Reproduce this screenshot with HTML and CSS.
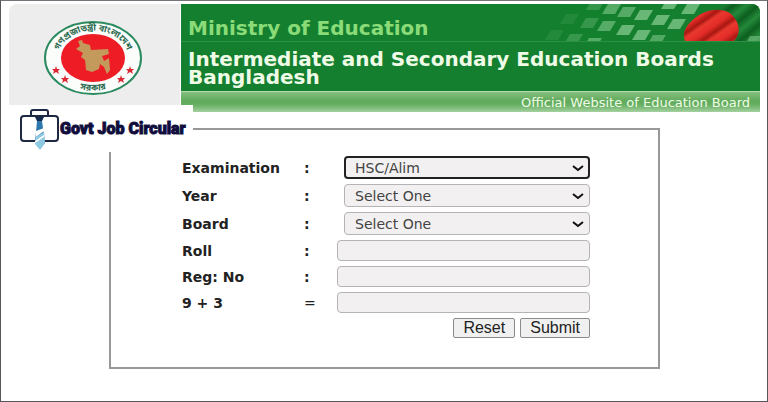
FILE: index.html
```html
<!DOCTYPE html>
<html lang="en">
<head>
<meta charset="utf-8">
<title>Intermediate and Secondary Education Boards Bangladesh</title>
<link rel="stylesheet" href="styles.css">
</head>
<body>
<div class="page">
  <header class="banner">
    <div class="emblem-box">
      <svg class="emblem" viewBox="0 0 98 74" role="img" aria-label="Government seal of Bangladesh">
        <defs>
          <path id="arc-top" d="M15 43A35 27 0 1 1 83 43"/>
          <path id="arc-bottom" d="M20 61A42 31 0 0 0 78 61"/>
          <path id="star" d="M0-4 1-1 4-1 2 1 3 4 0 2-3 4-2 1-4-1-1-1Z"/>
        </defs>
        <ellipse cx="49" cy="37" rx="48" ry="36" fill="#fbfdfb" stroke="#2b8a5f" stroke-width="2"/>
        <ellipse cx="49" cy="37" rx="32" ry="24" fill="#ee1c25"/>
        <path d="M34 20 38 19 39 22 46 24 47 29 64 28 65 33 58 35 60 40 65 37 66 49 63 53 60 46 56 43 55 48 48 51 42 49 41 39 37 36 39 32 32 28 36 25Z" fill="#c39a5c"/>
        <text class="seal-text"><textPath href="#arc-top" startOffset="50%" text-anchor="middle">গণপ্রজাতন্ত্রী বাংলাদেশ</textPath></text>
        <text class="seal-text"><textPath href="#arc-bottom" startOffset="50%" text-anchor="middle">সরকার</textPath></text>
        <g fill="#dc2733">
          <use href="#star" x="12" y="49"/><use href="#star" x="21" y="58"/>
          <use href="#star" x="77" y="58"/><use href="#star" x="86" y="49"/>
        </g>
      </svg>
    </div>
    <div class="titles">
      <svg class="flag" viewBox="0 0 220 37" aria-hidden="true">
        <defs>
          <linearGradient id="stripes" x1="0" y1="0" x2="9" y2="13" gradientUnits="userSpaceOnUse" spreadMethod="repeat">
            <stop offset="0" stop-color="#e8382f"/><stop offset=".4" stop-color="#e32c27"/>
            <stop offset=".75" stop-color="#a81812"/><stop offset="1" stop-color="#e8382f"/>
          </linearGradient>
          <linearGradient id="folds" x1="0" y1="0" x2="10" y2="12" gradientUnits="userSpaceOnUse" spreadMethod="repeat">
            <stop offset="0" stop-color="#0c5f20"/><stop offset=".5" stop-color="#24883a"/><stop offset="1" stop-color="#0c5f20"/>
          </linearGradient>
          <path id="tile" d="M6 0H19L13 10H0Z"/>
        </defs>
        <path d="M184 0H220V37H160Z" fill="url(#folds)"/>
        <g fill="#8ccf96">
          <g opacity=".12"><use href="#tile" x="20" y="10"/><use href="#tile" x="5" y="26"/></g>
          <g opacity=".3"><use href="#tile" x="24" y="30"/><use href="#tile" x="40" y="14"/><use href="#tile" x="46" y="-4"/></g>
          <g opacity=".55"><use href="#tile" x="62" y="0"/><use href="#tile" x="57" y="17"/><use href="#tile" x="43" y="34"/><use href="#tile" x="77" y="3"/></g>
          <g opacity=".7"><use href="#tile" x="76" y="21"/><use href="#tile" x="92" y="26"/><use href="#tile" x="94" y="6"/><use href="#tile" x="111" y="11"/><use href="#tile" x="127" y="15"/><use href="#tile" x="141" y="0"/><use href="#tile" x="121" y="-5"/></g>
          <g opacity=".5"><use href="#tile" x="107" y="31"/><use href="#tile" x="204" y="32"/></g>
        </g>
        <path d="M145 37C141 27 148 19 159 11 171 4 186 4 193 12 201 21 200 31 194 37Z" fill="url(#stripes)"/>
      </svg>
      <p class="ministry">Ministry of Education</p>
      <h1 class="boards">Intermediate and Secondary Education Boards Bangladesh</h1>
      <p class="official">Official Website of Education Board</p>
    </div>
  </header>

  <div class="brand">
    <svg class="brand-icon" viewBox="0 0 40 42" aria-hidden="true">
      <path d="M11 7V3Q11 1 13 1H26Q28 1 28 3V7" fill="none" stroke="#1d2943" stroke-width="2"/>
      <rect x="1" y="7" width="37" height="25" rx="3" fill="#fff" stroke="#1d2943" stroke-width="2"/>
      <path d="M15 8H24L22 12H17Z" fill="#152c4e"/>
      <path d="M17 12H22L25 34 20 40 15 34Z" fill="#2d77ad"/>
      <path d="M16 22 24 19V22L16 28Z" fill="#fff"/>
      <path d="M16 28 24 23 25 34 20 41 15 35Z" fill="#8fcae3"/>
      <path d="M15 32 24 26V28L15 34Z" fill="#fff"/>
    </svg>
    <span class="brand-name">Govt Job Circular</span>
  </div>

  <form class="panel">
    <div class="fields">
      <label for="exam">Examination</label><span class="sep">:</span>
      <select id="exam" class="active"><option>HSC/Alim</option></select>
      <label for="year">Year</label><span class="sep">:</span>
      <select id="year"><option>Select One</option></select>
      <label for="board">Board</label><span class="sep">:</span>
      <select id="board"><option>Select One</option></select>
      <label for="roll">Roll</label><span class="sep">:</span>
      <input id="roll" type="text">
      <label for="reg">Reg: No</label><span class="sep">:</span>
      <input id="reg" type="text">
      <label for="sum">9 + 3</label><span class="sep equals">=</span>
      <input id="sum" type="text">
    </div>
    <div class="actions">
      <button type="reset">Reset</button>
      <button type="submit">Submit</button>
    </div>
  </form>
</div>
</body>
</html>
```
FILE: styles.css
```css
* { box-sizing: border-box; }
body { margin: 0; background: #fff; font-family: "DejaVu Sans", Verdana, sans-serif; }
p, h1 { margin: 0; }

.page {
  position: relative;
  min-height: 100vh;
  padding: 3px 7px 0 8px;
  border: 1px solid #55555a;
  border-top-color: #77727a;
}

.banner {
  display: grid;
  grid-template-columns: 171px 1fr;
  column-gap: 1px;
  border-radius: 8px 8px 0 0;
  overflow: hidden;
}
.emblem-box {
  padding: 17px 0 0 35px;
  background: #ededed;
}
.emblem { display: block; width: 98px; height: 74px; }
.seal-text { font: bold 9px "Noto Sans Bengali", "Noto Sans", sans-serif; fill: #2d6b50; }

.titles { position: relative; background: #14802f; color: #effbe6; }
.flag { position: absolute; top: 0; right: 0; width: 220px; height: 37px; }
.ministry {
  height: 38px;
  padding: 14px 7px 0;
  border-bottom: 1px solid #2c9144;
  color: #8bdc78;
  font-size: 20px;
  font-weight: bold;
  line-height: 20px;
}
.boards {
  height: 49px;
  padding: 8px 7px 0;
  font-size: 20px;
  line-height: 18px;
}
.official {
  padding: 2px 10px 0;
  height: 21px;
  border-top: 1px solid #b5dbb0;
  background: linear-gradient(#85bf7e, #60ab5b 45%, #69b064 65%, #a4d19f);
  font-size: 13px;
  line-height: 18px;
  text-align: right;
}

.brand {
  position: absolute;
  top: 104px;
  left: 7px;
  display: flex;
  width: 185px;
  height: 47px;
  padding: 4px 0 0 12px;
  background: #fff;
}
.brand-icon { flex: none; width: 40px; height: 42px; }
.brand-name {
  color: #100d3c;
  font: 900 16px/40px Roboto, sans-serif;
  -webkit-text-stroke: 1px #100d3c;
  white-space: nowrap;
}

.panel {
  margin: 16px 100px 0;
  padding: 26px 68px 29px 71px;
  border: 2px solid #989898;
}
.fields {
  display: grid;
  grid-template-columns: 122px 33px 1fr;
  row-gap: 5px;
  align-items: center;
  font-size: 14px;
  line-height: 20px;
}
label, .sep { font-weight: bold; color: #222; }
.sep.equals { font-weight: normal; }
select, input {
  width: 100%;
  border: 1px solid #b5b3b5;
  border-radius: 4px;
  background-color: #f2f0f1;
  color: #444;
  font: 14px "DejaVu Sans", Verdana, sans-serif;
}
input { height: 21px; }
select {
  height: 23px;
  width: calc(100% - 7px);
  margin-left: 7px;
  padding: 0 10px;
  appearance: none;
  background-image: url("data:image/svg+xml,%3Csvg xmlns='http://www.w3.org/2000/svg' width='12' height='8'%3E%3Cpath d='M1 2 6 6 11 2' fill='none' stroke='%23111' stroke-width='2'/%3E%3C/svg%3E");
  background-repeat: no-repeat;
  background-position: right 5px center;
}
select.active { border: 2px solid #222; padding: 0 9px; background-position: right 4px center; }
.actions { display: flex; justify-content: flex-end; gap: 5px; margin-top: 5px; }
button {
  height: 20px;
  padding: 0 9px;
  border: 1px solid #8b8b8b;
  border-radius: 2px;
  background: #f0f0f0;
  color: #222;
  font: 16px/18px "Liberation Sans", Arial, sans-serif;
}
```
